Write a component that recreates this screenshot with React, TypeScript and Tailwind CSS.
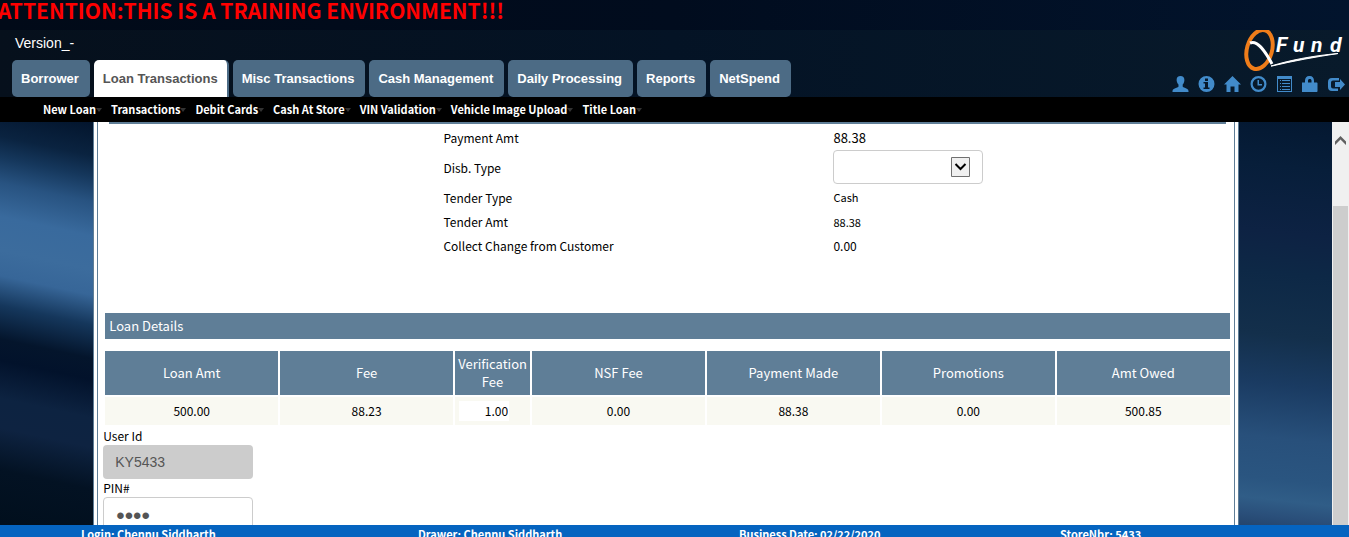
import React from 'react';

const tabs = ['Borrower', 'Loan Transactions', 'Misc Transactions', 'Cash Management', 'Daily Processing', 'Reports', 'NetSpend'];
const menu = ['New Loan', 'Transactions', 'Debit Cards', 'Cash At Store', 'VIN Validation', 'Vehicle Image Upload', 'Title Loan'];

const loan = [
  ['Loan Amt', '500.00'],
  ['Fee', '88.23'],
  ['Verification Fee', '1.00'],
  ['NSF Fee', '0.00'],
  ['Payment Made', '88.38'],
  ['Promotions', '0.00'],
  ['Amt Owed', '500.85'],
];

const actions: { name: string; art: React.ReactNode }[] = [
  {
    name: 'Profile',
    art: <path d="M8.500 0C11 0 12.400 1.600 12.400 4c0 1.800-.7 3.600-1.700 4.600v1.600c0 .8.5 1 1.400 1.300C14.600 12.400 16.500 13.200 16.500 15v1H.5v-1c0-1.800 1.900-2.600 4.600-3.500.9-.3 1.400-.5 1.400-1.300V8.600C5.500 7.600 4.600 5.800 4.600 4 4.600 1.600 6 0 8.500 0z" />,
  },
  {
    name: 'Information',
    art: <path fillRule="evenodd" d="M8.500 0a8 8 0 1 1 0 16 8 8 0 0 1 0-16zM7 2.500v2.500h3V2.500zM5.500 6v1.500H7V11.500H5.500V13h6v-1.500H10V6z" />,
  },
  {
    name: 'Home',
    art: <path d="M8.500 0L17 8.500h-2.500V16h-4v-5.500h-4V16h-4V8.500H0L8.500 0z" />,
  },
  {
    name: 'Time clock',
    art: <path fillRule="evenodd" d="M8.500 0a8 8 0 1 1 0 16 8 8 0 0 1 0-16zm0 2.200a5.800 5.800 0 1 0 0 11.600 5.800 5.800 0 0 0 0-11.600zM7.500 4H9v4h3v1.500H7.500z" />,
  },
  {
    name: 'List',
    art: <path fillRule="evenodd" d="M1 0h15v16H1zM2 3v12h13V3zM4 4h1v1H4zm2 0h8v1H6zM4 7h1v1H4zm2 0h8v1H6zM4 10h1v1H4zm2 0h8v1H6zM4 13h1v1H4zm2 0h8v1H6z" />,
  },
  {
    name: 'Lock',
    art: <path fillRule="evenodd" d="M3 6.500V4.500C3 2 4.800 0 7 0h1c2.200 0 4 2 4 4.500v2h2.500c.6 0 1 .4 1 1V15c0 .6-.4 1-1 1h-14c-.6 0-1-.4-1-1V7.500c0-.6.4-1 1-1zm3 0h3.500v-2C9.500 3.600 8.800 3 8 3h-.5C6.700 3 6 3.600 6 4.500z" />,
  },
  {
    name: 'Log out',
    art: <path d="M11 2V4.500H5a2 2 0 0 0-2 2v4a2 2 0 0 0 2 2H10V15H4a4 4 0 0 1-4-4V6a4 4 0 0 1 4-4h7zM12 3l5 5.500-5 5.500v-3H7V6h5z" />,
  },
];

function Logo() {
  return (
    <svg viewBox="0 0 106 42" className="h-[42px] w-[106px]" role="img" aria-label="QFund">
      <ellipse cx="20.5" cy="19.500" rx="12.500" ry="20" transform="rotate(16 20.5 19.5)" fill="none" stroke="#ef7d1a" strokeWidth="4" />
      <path d="M11 13C18 10 25 19 33 34" fill="none" stroke="#fff" strokeWidth="3" />
      <path d="M32 36C52 30 72 26 99 23.500 76 27 54 31 33 36z" fill="#fff" stroke="#fff" />
      <text y="22" fill="#fff" fontFamily="Roboto, sans-serif" fontSize="21" fontWeight="700" fontStyle="italic">
        <tspan x="37">F</tspan><tspan x="54">u</tspan><tspan x="72">n</tspan><tspan x="91">d</tspan>
      </text>
    </svg>
  );
}

function Field({ label, small, children }: { label: string; small?: boolean; children: React.ReactNode }) {
  return (
    <>
      <dt className="flex items-center text-[12px]">{label}</dt>
      <dd className={small ? 'flex items-center text-[11px]' : 'flex items-center text-[12px]'}>{children}</dd>
    </>
  );
}

export default function App() {
  return (
    <div className="flex h-screen flex-col overflow-hidden bg-[#020f20] font-['Noto_Sans_CJK_SC',sans-serif] text-black">
      <header className="shrink-0">
        <div className="h-[30px] overflow-hidden bg-linear-to-r from-[#010a18] via-[#010c1e] to-[#02142d]">
          <p className="-ml-0.5 text-[21px] leading-[20px] font-bold whitespace-nowrap text-[#ff0000]">ATTENTION:THIS IS A TRAINING ENVIRONMENT!!!</p>
        </div>
        <div className="flex h-[67px] justify-between bg-linear-to-r from-[#06101c] via-[#041325] to-[#081a2b]">
          <div className="flex flex-col justify-between pl-3 font-['Liberation_Sans',sans-serif]">
            <p className="pt-1 pl-[3px] text-[14px] leading-[18px] text-white">Version_-</p>
            <nav className="flex gap-1">
              {tabs.map((t) => (
                <a
                  key={t}
                  href="#"
                  className={
                    t === 'Loan Transactions'
                      ? 'flex h-[37px] items-center rounded-t-[5px] border-r-2 border-[#4c6b85] bg-white px-[9px] text-[13px] font-bold whitespace-nowrap text-[#555]'
                      : 'flex h-[37px] items-center rounded-[5px] bg-[#4c6b85] pr-[11px] pl-[9px] text-[13px] font-bold whitespace-nowrap text-white'
                  }
                >
                  {t}
                </a>
              ))}
            </nav>
          </div>
          <div className="flex flex-col items-end justify-between pr-1 pb-[5px]">
            <Logo />
            <div className="flex gap-[9px]">
              {actions.map((a) => (
                <button key={a.name} type="button" aria-label={a.name}>
                  <svg viewBox="0 0 17 16" className="block h-4 w-[17px] fill-[#428bca]">{a.art}</svg>
                </button>
              ))}
            </div>
          </div>
        </div>
        <nav className="flex h-[25px] items-center gap-[9px] bg-black pl-[43px]">
          {menu.map((m) => (
            <a key={m} href="#" className="flex items-center text-[11px] font-bold whitespace-nowrap text-white">
              {m}
              <svg viewBox="0 0 6 4" className="h-1 w-1.5 fill-[#333]"><path d="M0 0h6L3 4z" /></svg>
            </a>
          ))}
        </nav>
      </header>

      <div className="flex min-h-0 flex-1">
        <div className="flex min-w-0 flex-1 overflow-hidden">
          <div className="flex-1 bg-[linear-gradient(192deg,#03152d_0%,#0a2340_8%,#15375c_13%,#285381_19%,#396a9d_27%,#3c6c9d_35%,#376698_41%,#15375c_48%,#04152c_56%,#02122b_61%,#0d2341_70%,#0e2341_77%,#031223_87%,#010f1d_100%)]" />
          <main className="w-[86%] border-x border-[#5f7e97] bg-white px-[3px]">
            <div className="border-x border-[#5f7e97]">
              <div className="mr-2 ml-[11px] h-0.5 bg-[#5f7e97]" />
              <dl className="grid grid-cols-[390px_1fr] grid-rows-[25px_35px_25px_24px_24px] pt-px pl-[30.4%]">
                <Field label="Payment Amt"><span className="text-[13px]">88.38</span></Field>
                <dt className="flex items-center text-[12px]"><label htmlFor="disb">Disb. Type</label></dt>
                <dd className="relative w-[150px]">
                  <select id="disb" className="block h-[34px] w-full appearance-none rounded border border-[#ccc] bg-white px-3 text-[14px]">
                    <option value=""></option>
                  </select>
                  <svg viewBox="0 0 19 20" className="pointer-events-none absolute top-[7px] right-[13px] h-5 w-[19px]" aria-hidden="true">
                    <path d="M.5.500h18v19H.500z" fill="#f0f0f0" stroke="#707070" />
                    <path d="M4.500 7l5 5 5-5" fill="none" stroke="#000" strokeWidth="2" />
                  </svg>
                </dd>
                <Field label="Tender Type" small>Cash</Field>
                <Field label="Tender Amt" small>88.38</Field>
                <Field label="Collect Change from Customer">0.00</Field>
              </dl>
              <h2 className="mt-[55px] mr-1 ml-[7px] h-[26px] bg-[#5f7e97] pl-1 text-[13px] leading-[26px] text-white">Loan Details</h2>
              <div className="mt-[10px] mr-0.5 ml-[5px]">
                <table className="w-full table-fixed border-separate border-spacing-[2px]">
                  <thead>
                    <tr className="h-[44px]">
                      {loan.map(([h]) => (
                        <th key={h} scope="col" className={h === 'Verification Fee' ? 'w-[75px] bg-[#5f7e97] p-0 text-[13px] leading-[18px] font-normal text-white' : 'bg-[#5f7e97] p-0 text-[13px] leading-[18px] font-normal text-white'}>
                          {h}
                        </th>
                      ))}
                    </tr>
                  </thead>
                  <tbody>
                    <tr className="h-7">
                      {loan.map(([h, v]) => (
                        <td key={h} className="bg-[#f9f9f2] p-0 text-center text-[12px] leading-[20px]">
                          {h === 'Verification Fee' ? (
                            <input aria-label={h} defaultValue={v} className="ml-1 block h-5 w-[50px] bg-white pr-px text-right" />
                          ) : (
                            v
                          )}
                        </td>
                      ))}
                    </tr>
                  </tbody>
                </table>
              </div>
              <form className="flex w-[155px] flex-col pl-[5px] text-[12px] leading-[18px]">
                <label htmlFor="user">User Id</label>
                <input id="user" readOnly value="KY5433" className="h-[34px] rounded bg-[#ccc] px-3 font-['Liberation_Sans',sans-serif] text-[14px] text-[#555]" />
                <label htmlFor="pin">PIN#</label>
                <input id="pin" type="password" defaultValue="1234" className="h-[34px] rounded border border-[#ccc] bg-white px-3 pt-1 font-['Liberation_Sans',sans-serif] text-[24px] text-[#555]" />
              </form>
            </div>
          </main>
          <div className="flex-1 bg-[linear-gradient(186deg,#041831_0%,#071e3a_12%,#0d2243_28%,#0d2846_38%,#132f4b_53%,#1a3b62_65%,#28507b_78%,#2a5580_88%,#305d87_93%,#2a4f7a_97%,#24456d_100%)]" />
        </div>
        <div className="flex w-[17px] shrink-0 flex-col items-center bg-[#f0f0f0]">
          <svg viewBox="0 0 11 9" className="mt-[14px] h-[9px] w-[11px]" aria-hidden="true">
            <path d="M0 9V5.500L5.500 0 11 5.500V9L5.500 3.500z" fill="#606060" />
          </svg>
          <div className="mt-[61px] w-[15px] flex-1 bg-[#cdcdcd]" />
        </div>
      </div>

      <footer className="grid h-3 shrink-0 grid-cols-[337fr_321fr_321fr_289fr] overflow-hidden bg-[#0564c0] pl-[6%] text-[11px] leading-[18px] font-bold whitespace-nowrap text-white">
        <span>Login: Chennu Siddharth</span>
        <span>Drawer: Chennu Siddharth</span>
        <span>Business Date: 02/22/2020</span>
        <span>StoreNbr: 5433</span>
      </footer>
    </div>
  );
}
